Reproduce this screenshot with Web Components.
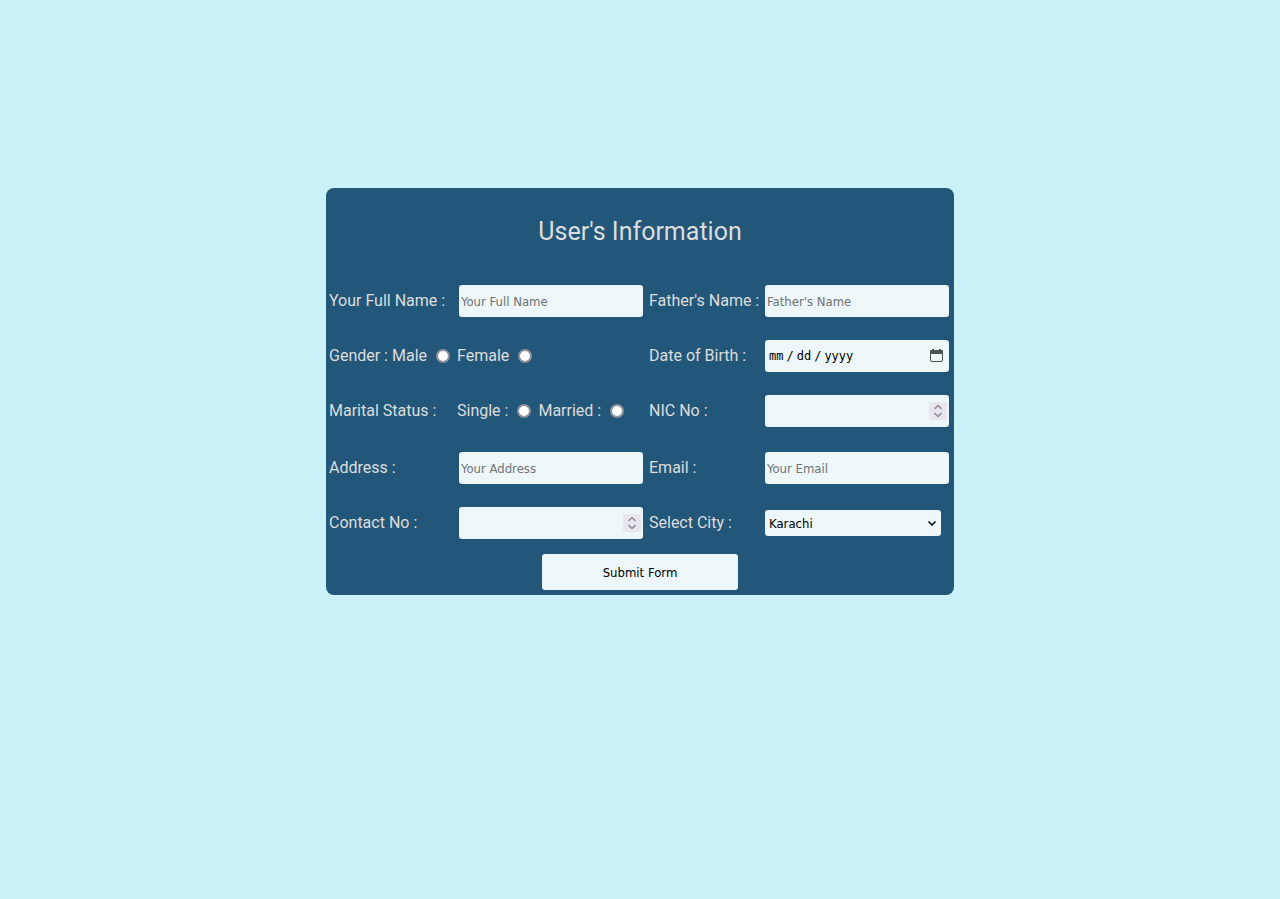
<!DOCTYPE html>
<html lang="en">
<head>
<meta charset="utf-8">
<meta name="viewport" content="width=device-width, initial-scale=1">
<title>User's Information</title>
<style>
  body { margin: 0; min-height: 100vh; background: #caf0f8; color: #ddd; font: 16px/20px Roboto, sans-serif; }
</style>
</head>
<body>
<info-card heading="User's Information">
  <text-field label="Your Full Name :" placeholder="Your Full Name"></text-field>
  <text-field class="end" label="Father's Name :" placeholder="Father's Name"></text-field>
  <radio-field label="Gender :" options="Male,Female"></radio-field>
  <text-field class="end" label="Date of Birth :" type="date"></text-field>
  <radio-field class="columns" label="Marital Status :" options="Single :,Married :"></radio-field>
  <text-field class="end" label="NIC No :" type="number"></text-field>
  <text-field label="Address :" placeholder="Your Address"></text-field>
  <text-field class="end" label="Email :" type="email" placeholder="Your Email"></text-field>
  <text-field label="Contact No :" type="number"></text-field>
  <city-field class="end" label="Select City :" options="Karachi,Lahore,Islamabad,Quetta,Peshawar"></city-field>
  <submit-button slot="action">Submit Form</submit-button>
</info-card>

<script>
const fieldStyles = `
  :host { display: grid; grid-template-columns: 128px minmax(0, 1fr); align-items: center; min-height: 32px; padding-right: 4px; }
  :host(.end) { grid-template-columns: 114px minmax(0, 1fr); padding-right: 0; }
  * { box-sizing: border-box; }
  label { white-space: nowrap; }
  input:not([type=radio]), select {
    display: block; height: 32px; margin: 0 2px; padding: 0 2px; border: 0; border-radius: 3px;
    background-color: #edf6f9; color: #000; font: 13px "DejaVu Sans Condensed", "DejaVu Sans", sans-serif;
  }
  input::placeholder { color: #6f7375; opacity: 1; }
`;

customElements.define('info-card', class extends HTMLElement {
  constructor() {
    super();
    this.attachShadow({ mode: 'open' }).innerHTML = `
      <style>
        :host { display: block; padding: 188px 16px 16px; }
        form { box-sizing: border-box; max-width: 628px; margin: 0 auto; padding: 22px 3px 5px; border-radius: 8px; background: #22577a; }
        h1 { margin: 0 0 31px; font-size: 25px; font-weight: 400; line-height: 44px; text-align: center; }
        .fields { display: grid; grid-template-columns: 320fr 302fr; align-items: start; row-gap: 23px; }
        .action { display: flex; justify-content: center; margin-top: 15px; }
        @media (max-width: 640px) { .fields { grid-template-columns: 1fr; } }
      </style>
      <form>
        <h1></h1>
        <div class="fields"><slot></slot></div>
        <div class="action"><slot name="action"></slot></div>
      </form>`;
    this.shadowRoot.querySelector('h1').textContent = this.getAttribute('heading');
  }
});

customElements.define('text-field', class extends HTMLElement {
  constructor() {
    super();
    this.attachShadow({ mode: 'open' }).innerHTML = `
      <style>${fieldStyles}
        input[type=date] { padding: 0 6px 0 4px; font: 12px "DejaVu Sans Mono", monospace; }
        input::-webkit-datetime-edit-text { padding: 0 3px; }
        input::-webkit-datetime-edit-month-field,
        input::-webkit-datetime-edit-day-field,
        input::-webkit-datetime-edit-year-field { padding: 0; }
        input::-webkit-calendar-picker-indicator {
          width: 13px; height: 13px; margin: 0 0 2px; padding: 0;
          background: url("data:image/svg+xml,%3Csvg xmlns='http://www.w3.org/2000/svg' viewBox='0 0 13 13'%3E%3Cpath d='M2 0h2v1h5V0h2v1h1q1 0 1 1v9q0 2-2 2H2q-2 0-2-2V2q0-1 1-1h1zM1 5v6q0 1 1 1h9q1 0 1-1V5z' fill='%234c5153' fill-rule='evenodd'/%3E%3C/svg%3E") center / 13px 13px no-repeat;
        }
        input::-webkit-inner-spin-button {
          -webkit-appearance: none; opacity: 1; width: 18px; height: 18px; margin: 0;
          background: #e9e7ed url("data:image/svg+xml,%3Csvg xmlns='http://www.w3.org/2000/svg' viewBox='0 0 18 18'%3E%3Cpath d='M5.5 6.8L9 3.5l3.5 3.3M5.500 11.2L9 14.5l3.5-3.3' fill='none' stroke='%238f8f9d' stroke-width='1.6'/%3E%3C/svg%3E") center / 18px 18px no-repeat;
        }
      </style>
      <label for="control"></label><input id="control">`;
    const input = this.shadowRoot.querySelector('input');
    this.shadowRoot.querySelector('label').textContent = this.getAttribute('label');
    input.type = this.getAttribute('type') || 'text';
    input.placeholder = this.getAttribute('placeholder') || '';
  }
});

customElements.define('radio-field', class extends HTMLElement {
  constructor() {
    super();
    this.attachShadow({ mode: 'open' }).innerHTML = `
      <style>${fieldStyles}
        :host { grid-template-columns: auto minmax(0, 1fr); column-gap: 4px; }
        :host(.columns) { grid-template-columns: 128px minmax(0, 1fr); column-gap: 0; padding-bottom: 2px; }
        .choices { display: flex; gap: 7px; }
        label { display: flex; align-items: center; gap: 9px; }
        input { appearance: none; width: 14px; height: 14px; margin: 0; border: 2px solid #8f8f9d; border-radius: 50%; background: #fff; }
        input:checked { background: #0060df; box-shadow: inset 0 0 0 2px #fff; }
      </style>
      <span id="caption"></span><div class="choices" role="radiogroup" aria-labelledby="caption"></div>`;
    this.shadowRoot.querySelector('span').textContent = this.getAttribute('label');
    const group = this.shadowRoot.querySelector('.choices');
    for (const option of this.getAttribute('options').split(',')) {
      const label = document.createElement('label');
      const radio = document.createElement('input');
      radio.type = 'radio';
      radio.name = 'choice';
      label.append(option, radio);
      group.append(label);
    }
  }
});

customElements.define('city-field', class extends HTMLElement {
  constructor() {
    super();
    this.attachShadow({ mode: 'open' }).innerHTML = `
      <style>${fieldStyles}
        select {
          appearance: none; width: 176px; height: 26px; padding: 0 20px 0 4px;
          background: #edf6f9 url("data:image/svg+xml,%3Csvg xmlns='http://www.w3.org/2000/svg' viewBox='0 0 10 10'%3E%3Cpath d='M1.5 3.500L5 7 8.500 3.500' fill='none' stroke='black' stroke-width='1.5'/%3E%3C/svg%3E") right 4px center / 10px 10px no-repeat;
        }
      </style>
      <label for="city"></label><select id="city"></select>`;
    this.shadowRoot.querySelector('label').textContent = this.getAttribute('label');
    const select = this.shadowRoot.querySelector('select');
    for (const name of this.getAttribute('options').split(',')) select.add(new Option(name));
  }
});

customElements.define('submit-button', class extends HTMLElement {
  constructor() {
    super();
    this.attachShadow({ mode: 'open' }).innerHTML = `
      <style>
        :host { display: block; width: 196px; }
        button { display: block; width: 100%; height: 36px; padding: 0; border: 0; border-radius: 3px; background: #edf6f9; color: #000; font: 13px "DejaVu Sans Condensed", "DejaVu Sans", sans-serif; }
      </style>
      <button type="button"><slot></slot></button>`;
  }
});
</script>
</body>
</html>
